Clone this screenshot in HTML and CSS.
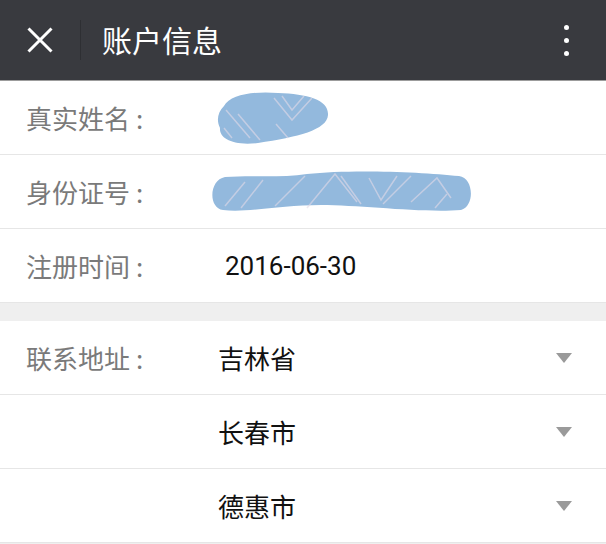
FILE: index.html
```html
<!DOCTYPE html>
<html lang="zh-CN">
  <head>
    <meta charset="UTF-8" />
    <meta name="viewport" content="width=device-width, initial-scale=1.0" />
    <title>账户信息</title>
    <link rel="stylesheet" href="styles.css">
  </head>

  <body>
    <div class="top-bar">
      <svg class="close-icon" width="26" height="26" viewBox="0 0 26 26">
        <path d="M1.5 1.5 L24.5 24.5 M24.5 1.5 L1.5 24.5" stroke="#fff" stroke-width="3" fill="none" />
      </svg>
      <div class="bar-divider"></div>
      <p class="bar-title">账户信息</p>
      <div class="more-dots">
        <span class="dot"></span>
        <span class="dot"></span>
        <span class="dot"></span>
      </div>
    </div>

    <div class="info-group">
      <div class="info-row">
        <span class="row-label">真实姓名<span class="colon">:</span></span>
        <span class="row-value blob-value">
          <svg width="113" height="55" viewBox="0 0 113 55">
            <path d="M8 16 C 14 4, 40 1, 62 3 C 92 4, 113 10, 112 25 C 111 40, 82 47, 42 53 C 16 56, 3 48, 4 38 C 0 30, 2 22, 8 16 Z" fill="#93b9dd" />
            <g stroke="#e4dbe8" stroke-width="1.5" opacity="0.6" fill="none">
              <path d="M58 8 L76 30 L96 8" />
              <path d="M66 6 L76 20 L88 6" />
              <path d="M10 20 L34 48" />
              <path d="M22 24 L44 50" />
              <path d="M60 34 L72 48" />
              <path d="M8 38 L16 48" />
            </g>
          </svg>
        </span>
      </div>

      <div class="info-row">
        <span class="row-label">身份证号<span class="colon">:</span></span>
        <span class="row-value blob-value id-blob">
          <svg width="262" height="43" viewBox="0 0 262 43">
            <path d="M14 7 C 40 5, 70 8, 96 4 C 140 -1, 210 2, 248 6 C 263 8, 264 36, 250 40 C 210 43, 150 35, 110 35 C 70 35, 36 43, 12 40 C -3 38, -2 10, 14 7 Z" fill="#93b9dd" />
            <g stroke="#e4dbe8" stroke-width="1.5" opacity="0.6" fill="none">
              <path d="M14 36 L34 12" />
              <path d="M30 38 L52 10" />
              <path d="M64 36 L94 6" />
              <path d="M96 38 L124 4 L146 32" />
              <path d="M130 6 L150 34" />
              <path d="M158 8 L170 30 L186 6" />
              <path d="M172 34 L200 6" />
              <path d="M200 32 L226 8 L240 28" />
              <path d="M224 38 L236 24" />
            </g>
          </svg>
        </span>
      </div>

      <div class="info-row">
        <span class="row-label">注册时间<span class="colon">:</span></span>
        <span class="row-value date-value">2016-06-30</span>
      </div>
    </div>

    <div class="info-group">
      <div class="info-row">
        <span class="row-label">联系地址<span class="colon">:</span></span>
        <span class="row-value">吉林省</span>
        <span class="drop-arrow"></span>
      </div>
      <div class="info-row">
        <span class="row-label"></span>
        <span class="row-value">长春市</span>
        <span class="drop-arrow"></span>
      </div>
      <div class="info-row">
        <span class="row-label"></span>
        <span class="row-value">德惠市</span>
        <span class="drop-arrow"></span>
      </div>
    </div>
  </body>
</html>
```

FILE: styles.css
```css
body {
  margin: 0;
  font-family: "Noto Sans CJK SC", Roboto, sans-serif;
  background-color: #efefef;
}

.top-bar {
  display: flex;
  align-items: center;
  height: 80px;
  padding-left: 27px;
  padding-right: 37px;
  background-color: #393a3f;
  border-bottom: 1px solid #9c9c9c;
}

.close-icon {
  display: block;
  flex-shrink: 0;
}

.bar-divider {
  width: 1px;
  height: 40px;
  margin-left: 27px;
  background-color: #2e2f33;
}

.bar-title {
  flex: 1;
  margin: 0 0 2px 21px;
  font-size: 30px;
  color: white;
}

.more-dots {
  display: flex;
  flex-direction: column;
  gap: 8px;
}

.dot {
  width: 5px;
  height: 5px;
  border-radius: 50%;
  background-color: white;
}

.info-group {
  background-color: white;
  margin-bottom: 18px;
}

.info-row {
  display: flex;
  align-items: center;
  height: 73px;
  padding-left: 26px;
  padding-right: 34px;
  border-bottom: 1px solid #e6e6e6;
}

.row-label {
  width: 192px;
  font-size: 26px;
  color: #7a7a7a;
}

.colon {
  margin-left: 6px;
}

.row-value {
  flex: 1;
  font-size: 26px;
  color: #111;
}

.blob-value {
  display: flex;
  margin-left: -2px;
}

.blob-value svg {
  display: block;
}

.id-blob {
  margin-left: -7px;
}

.date-value {
  margin-left: 7px;
  font-family: Roboto, sans-serif;
}

/* small gray triangle on the select rows */
.drop-arrow {
  width: 0;
  height: 0;
  border-left: 8px solid transparent;
  border-right: 8px solid transparent;
  border-top: 10px solid #9a9a9a;
}
```
